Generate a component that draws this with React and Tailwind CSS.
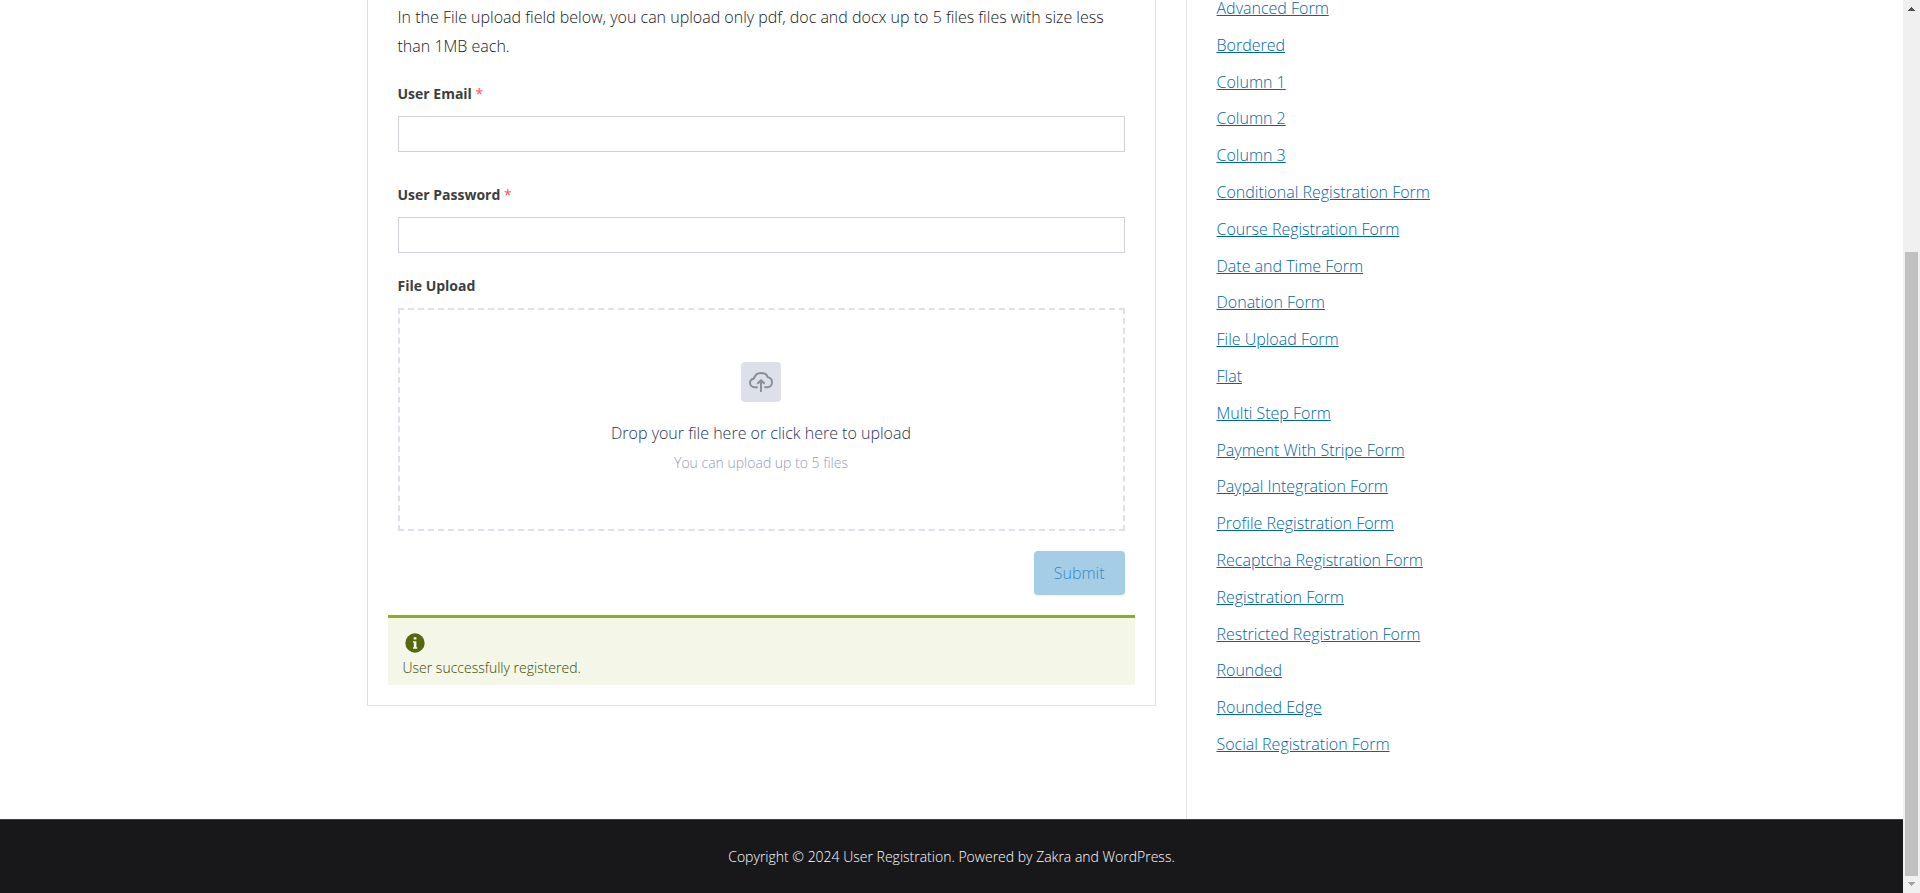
const forms = [
  "Advanced Form", "Bordered", "Column 1", "Column 2", "Column 3",
  "Conditional Registration Form", "Course Registration Form", "Date and Time Form",
  "Donation Form", "File Upload Form", "Flat", "Multi Step Form",
  "Payment With Stripe Form", "Paypal Integration Form", "Profile Registration Form",
  "Recaptcha Registration Form", "Registration Form", "Restricted Registration Form",
  "Rounded", "Rounded Edge", "Social Registration Form",
];

function Field({ id, label, type }) {
  return (
    <div className="flex flex-col gap-2">
      <label htmlFor={id} className="text-sm leading-7 font-bold text-[#3c3d40]">
        {label} <span className="font-normal text-[#ff4f55]">*</span>
      </label>
      <input id={id} type={type} className="h-9 w-full border border-[#d0d1d6] bg-white px-3 text-base outline-none" />
    </div>
  );
}

function CloudIcon() {
  return (
    <svg viewBox="0 0 24 20" className="h-5 w-6" fill="none" stroke="#868e96" strokeWidth="1.9" strokeLinecap="round" strokeLinejoin="round" aria-hidden="true">
      <path d="M8 15.200H5.400A4.500 4.500 0 0 1 1 10.900C1 8.700 2.500 7.200 4.700 6.800C5.900 3.100 8.500 1 12 1S18 3.100 18.600 5.100C21.300 5.600 23 7.600 23 10.200C23 13 21 15.200 18.200 15.200H16" />
      <path d="M12 19.200V8.400M8.900 11.200L12 8.200L15.100 11.200" />
    </svg>
  );
}

function InfoIcon() {
  return (
    <svg viewBox="0 0 20 20" className="h-5 w-5" aria-hidden="true">
      <circle cx="10" cy="10" r="9.700" fill="#55680f" />
      <path d="M8.700 4.200h2.700v2.200H8.700zM8 8.200h3.400v6h.9v1.600H8v-1.600h.8V9.800H8z" fill="#f4f6e7" />
    </svg>
  );
}

function Scrollbar() {
  return (
    <div className="flex w-[17px] shrink-0 flex-col items-center bg-[#f0f0f0]" aria-hidden="true">
      <svg viewBox="0 0 17 17" className="h-[17px] w-[17px]"><path d="M5 11h7v-1h-1V9h-1V8H9V7H8v1H7v1H6v1H5z" fill="#505050" /></svg>
      <div className="grow-[235]" />
      <div className="w-[13px] grow-[624] bg-[#c1c1c1]" />
      <svg viewBox="0 0 17 17" className="h-[17px] w-[17px]"><path d="M5 6h7v1h-1v1h-1v1H9v1H8V9H7V8H6V7H5z" fill="#a3a3a3" /></svg>
    </div>
  );
}

export default function App() {
  return (
    <div className="flex min-h-screen bg-white font-['Open_Sans','Noto_Sans',sans-serif] text-base font-light text-[#3f3f46]">
      <div className="flex min-w-0 grow flex-col">
        <div className="mx-auto flex w-full max-w-[1170px] grow">
          <main className="w-[70%] shrink-0 pr-[30px] pb-[113px]">
            <form className="border border-t-0 border-[#dddfe9] px-5 pt-[3px] pb-5" onSubmit={(e) => e.preventDefault()}>
              <div className="px-2.5">
                <p className="mb-[19px] leading-[29px] text-[#18181b]">
                  In the File upload field below, you can upload only pdf, doc and docx up to 5 files files with size less than 1MB each.
                </p>
                <div className="flex flex-col gap-[29px]">
                  <Field id="email" label="User Email" type="email" />
                  <Field id="password" label="User Password" type="password" />
                </div>
                <div className="mt-[19px] flex flex-col gap-2">
                  <label htmlFor="files" className="text-sm leading-7 font-bold text-[#3c3d40]">File Upload</label>
                  <label className="relative flex cursor-pointer flex-col items-center border-2 border-dashed border-[#dddfe9] pt-[52px] pb-[54px]">
                    <input id="files" type="file" multiple accept=".pdf,.doc,.docx" className="sr-only" />
                    <span className="flex h-10 w-10 items-center justify-center rounded-sm bg-[#dddfe9]"><CloudIcon /></span>
                    <span className="mt-[17px] leading-7 text-[#2b3358]">Drop your file here or click here to upload</span>
                    <span className="mt-1 text-sm leading-6 text-[#939bbb]">You can upload up to 5 files</span>
                  </label>
                </div>
                <div className="mt-5 flex justify-end">
                  <button type="submit" disabled className="h-11 rounded bg-[#a5cee6] px-5 text-[#3389c8] shadow-xs">Submit</button>
                </div>
              </div>
              <div role="status" className="mt-5 border-t-[3px] border-[#8fae1b] bg-[#f4f6e7] px-[15px] pt-[15px] pb-1.5 text-sm text-[#3a4900]">
                <div className="px-0.5"><InfoIcon /></div>
                <p className="pt-[3px] leading-[23px]">User successfully registered.</p>
              </div>
            </form>
          </main>
          <aside className="grow border-l border-[#e4e4e7] pb-[67px] pl-[30px]">
            <ul className="flex h-full flex-col justify-between">
              {forms.map((name) => (
                <li key={name} className="leading-4">
                  <a href="#" className="text-[#0066a6] underline">{name}</a>
                </li>
              ))}
            </ul>
          </aside>
        </div>
        <footer className="border-t border-[#3f3f46] bg-[#18181b] py-6 text-center text-sm leading-[25px] text-white">
          Copyright © 2024 <a href="#">User Registration</a>. Powered by <a href="#">Zakra</a> and <a href="#">WordPress</a>.
        </footer>
      </div>
      <Scrollbar />
    </div>
  );
}
